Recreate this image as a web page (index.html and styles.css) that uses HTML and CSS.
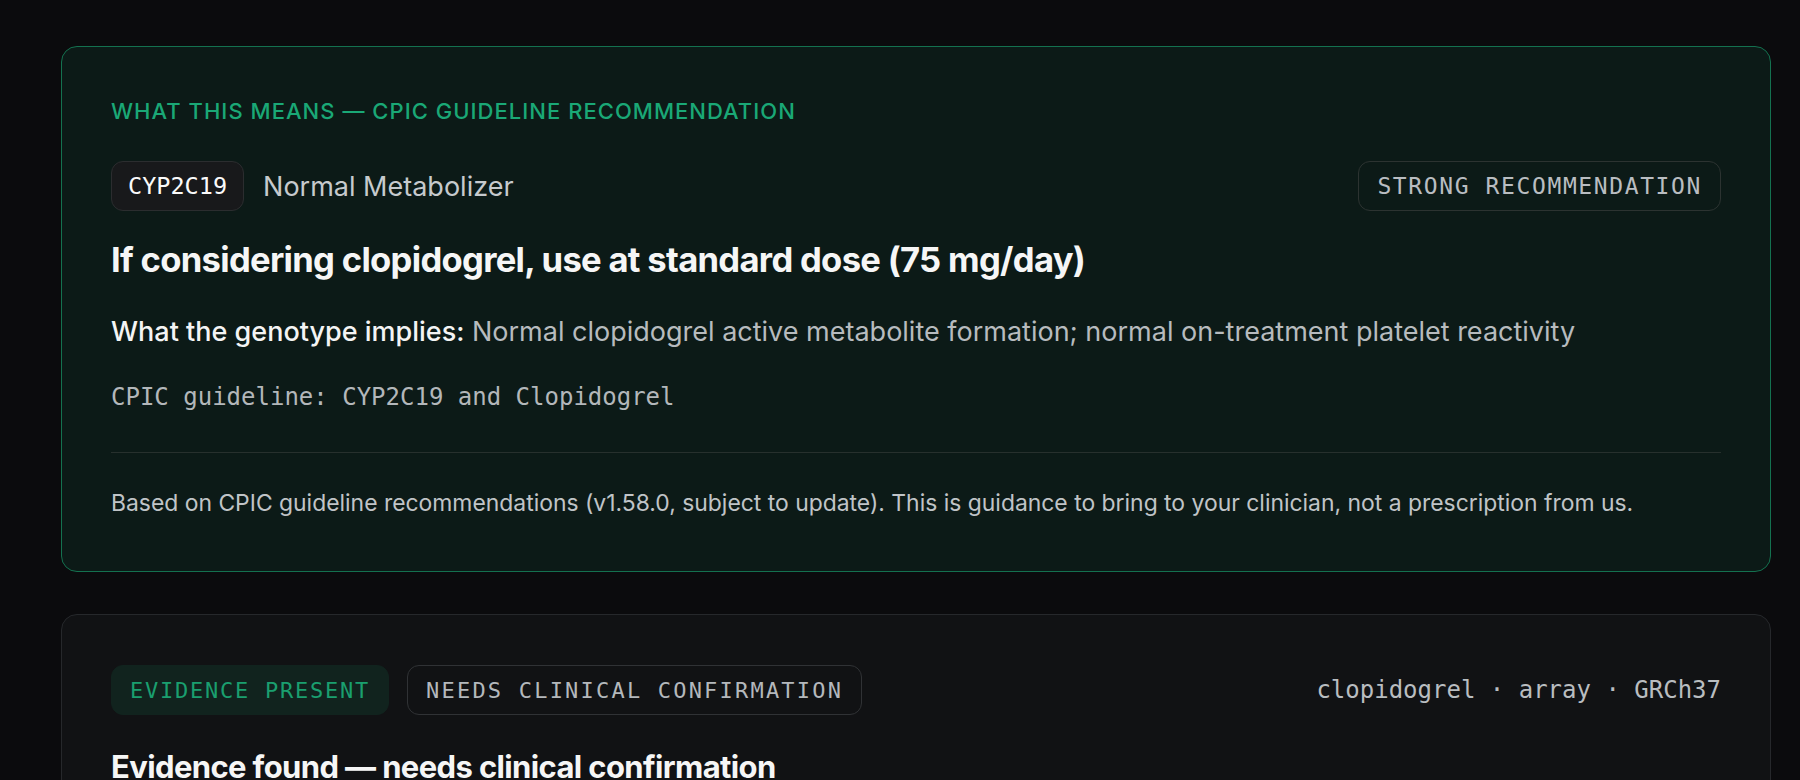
FILE: index.html
```html
<!DOCTYPE html>
<html lang="en">
<head>
    <meta charset="UTF-8">
    <meta name="viewport" content="width=device-width, initial-scale=1.0">
    <title>Clopidogrel — CYP2C19</title>
    <link rel="stylesheet" href="styles.css">
</head>
<body>
    <main class="page">
        <section class="card card-guide">
            <p class="eyebrow">What this means — CPIC guideline recommendation</p>
            <div class="gene-row">
                <div class="gene-info">
                    <span class="chip chip-gene">CYP2C19</span>
                    <span class="phenotype">Normal Metabolizer</span>
                </div>
                <span class="chip chip-outline">Strong recommendation</span>
            </div>
            <h2 class="rec-title">If considering clopidogrel, use at standard dose (75 mg/day)</h2>
            <p class="implies"><strong>What the genotype implies:</strong> Normal clopidogrel active metabolite formation; normal on-treatment platelet reactivity</p>
            <p class="source">CPIC guideline: CYP2C19 and Clopidogrel</p>
            <p class="note">Based on CPIC guideline recommendations (v1.58.0, subject to update). This is guidance to bring to your clinician, not a prescription from us.</p>
        </section>

        <section class="card card-evidence">
            <div class="status-row">
                <div class="badges">
                    <span class="badge badge-green">Evidence present</span>
                    <span class="badge badge-outline">Needs clinical confirmation</span>
                </div>
                <span class="meta">clopidogrel · array · GRCh37</span>
            </div>
            <h2 class="ev-title">Evidence found — needs clinical confirmation</h2>
        </section>
    </main>
</body>
</html>
```

FILE: styles.css
```css
body {
    margin: 0;
    background: #0b0b0d;
    color: #f2f3f3;
    font-family: 'Inter', 'Noto Sans', sans-serif;
}
.page {
    padding: 46px 29px 0 61px;
    display: flex;
    flex-direction: column;
    gap: 42px;
}
p, h2 { margin: 0; }

.card {
    border-radius: 16px;
    padding: 50px 49px 53px;
}
.card-guide {
    background: #0c1a17;
    border: 1px solid #14714f;
}
.card-evidence {
    background: #111214;
    border: 1px solid #26282b;
    padding-top: 50px;
}

.eyebrow {
    font-size: 22px;
    line-height: 28px;
    font-weight: 500;
    letter-spacing: 0.047em;
    text-transform: uppercase;
    color: #1aa876;
}

.gene-row {
    margin-top: 36px;
    display: flex;
    align-items: center;
    justify-content: space-between;
}
.gene-info {
    display: flex;
    align-items: center;
    gap: 19px;
}

/* mono pills */
.chip, .badge, .source, .meta {
    font-family: 'DejaVu Sans Mono', 'Liberation Mono', monospace;
}
.chip {
    display: inline-flex;
    align-items: center;
    height: 50px;
    box-sizing: border-box;
    padding: 0 18px;
    border-radius: 12px;
    font-size: 22px;
}
.chip-gene {
    background: #18191b;
    border: 1px solid #2b2d2f;
    color: #fafafa;
    font-size: 23.5px;
    padding: 0 16px;
}
.chip-outline {
    border: 1px solid #2c3331;
    color: #b9bdc1;
    font-size: 23px;
    letter-spacing: 0.07em;
    text-transform: uppercase;
}
.phenotype {
    font-size: 27px;
    color: #c6cacd;
}

.rec-title {
    margin-top: 28px;
    font-size: 34.6px;
    line-height: 40px;
    font-weight: 700;
    letter-spacing: -0.02em;
    color: #f6f6f6;
}
.implies {
    margin-top: 36px;
    font-size: 27px;
    line-height: 34px;
    color: #b7bbbe;
}
.implies strong {
    font-weight: 500;
    color: #f4f4f4;
}
.source {
    margin-top: 33px;
    font-size: 24px;
    line-height: 30px;
    color: #b3b7ba;
}
.note {
    margin-top: 40px;
    padding-top: 35px;
    border-top: 1px solid #27302d;
    font-size: 22.9px;
    line-height: 30px;
    color: #c0c4c7;
}

.status-row {
    display: flex;
    align-items: center;
    justify-content: space-between;
}
.badges {
    display: flex;
    gap: 18px;
}
.badge {
    height: 50px;
    box-sizing: border-box;
    display: inline-flex;
    align-items: center;
    padding: 0 18px;
    border-radius: 12px;
    font-size: 22px;
    letter-spacing: 0.08em;
    text-transform: uppercase;
}
.badge-green {
    background: #11231e;
    border: 1px solid #11231e;
    color: #1a9f6f;
}
.badge-outline {
    border: 1px solid #303235;
    color: #b4b8bc;
    letter-spacing: 0.1em;
}
.meta {
    font-size: 24px;
    color: #b9bdc0;
}
.ev-title {
    margin-top: 32px;
    font-size: 31px;
    line-height: 40px;
    font-weight: 700;
    letter-spacing: -0.02em;
    color: #f6f6f6;
}
```
